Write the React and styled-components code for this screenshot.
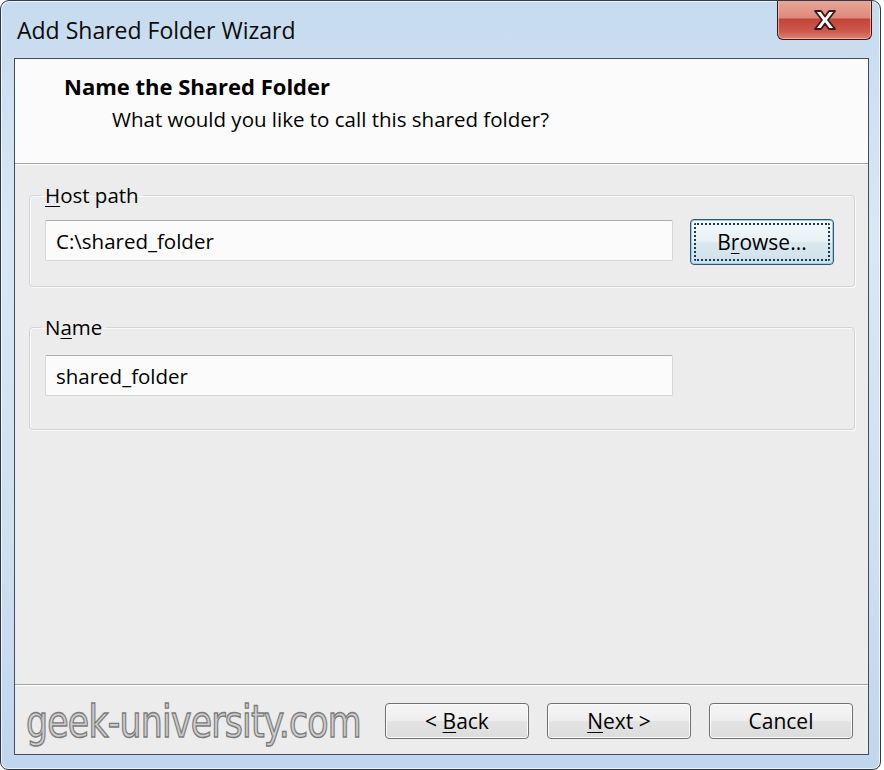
import React from "react";
import styled, { createGlobalStyle } from "styled-components";

const Global = createGlobalStyle`
  html, body { margin: 0; padding: 0; background: #ffffff; }
  body { font-family: "Open Sans", "Noto Sans", sans-serif; }
  * { box-sizing: border-box; }
`;

const Window = styled.div`
  width: 881px;
  height: 770px;
  border: 1px solid #2e3b4a;
  border-radius: 9px 9px 8px 8px;
  background: linear-gradient(180deg, #c6dbef 0%, #d9e7f5 30%, #cfe0f1 70%, #c0d6ec 100%);
  box-shadow: inset 0 0 0 1px rgba(255, 255, 255, 0.7);
  padding: 0 11px 14px 13px;
  display: flex;
  flex-direction: column;
  overflow: hidden;
`;

const TitleBar = styled.div`
  height: 57px;
  display: flex;
  align-items: flex-start;
  justify-content: space-between;
`;

const Title = styled.div`
  margin: 14px 0 0 3px;
  font-family: "Open Sans", sans-serif;
  font-size: 23px;
  line-height: 30px;
  color: #0b0b0b;
`;

const CloseButton = styled.div`
  margin: -1px -3px 0 0;
  width: 95px;
  height: 40px;
  border: 1px solid #3d1712;
  border-top: none;
  border-radius: 0 0 6px 6px;
  background: linear-gradient(180deg, #e9a899 0%, #dd8a7a 45%, #c4443a 50%, #cd5a4c 80%, #d98475 100%);
  box-shadow: inset 0 0 0 1px rgba(255, 210, 200, 0.6);
  display: flex;
  align-items: center;
  justify-content: center;
`;

const Client = styled.div`
  flex: 1;
  display: flex;
  flex-direction: column;
  border: 1px solid #3f4e5e;
  background: #ececec;
`;

const Header = styled.div`
  height: 105px;
  background: #fbfbfb;
  padding: 12px 0 0 49px;
  display: flex;
  flex-direction: column;
  gap: 4px;
  border-bottom: 1px solid #a3a3a3;
  box-shadow: 0 1px 0 #ffffff;
`;

const HeaderTitle = styled.div`
  font-family: "Open Sans", sans-serif;
  font-weight: 700;
  font-size: 22px;
  line-height: 30px;
  color: #000;
`;

const HeaderSub = styled.div`
  margin-left: 48px;
  font-family: "Open Sans", sans-serif;
  font-size: 20.5px;
  line-height: 28px;
  color: #000;
`;

const Body = styled.div`
  flex: 1;
  margin-top: 1px;
  padding: 17px 13px 0 14px;
  display: flex;
  flex-direction: column;
  gap: 27px;
`;

const Group = styled.fieldset`
  margin: 0;
  padding: ${(p) => p.$top}px 20px ${(p) => p.$bottom}px 15px;
  border: 1px solid #d3d3d3;
  border-radius: 4px;
  box-shadow: inset 1px 1px 0 #fafafa, 1px 1px 0 #fafafa;
  display: flex;
  align-items: flex-start;
  gap: 17px;
`;

const Legend = styled.legend`
  margin-left: -4px;
  padding: 0 4px;
  font-family: "Open Sans", sans-serif;
  font-size: 20.5px;
  line-height: 26px;
  color: #000;
`;

const Mn = styled.span`
  text-decoration: underline;
  text-underline-offset: 3px;
  text-decoration-thickness: 1px;
`;

const Input = styled.div`
  width: 628px;
  height: 41px;
  margin-top: ${(p) => p.$offset || 0}px;
  padding: 0 10px;
  background: #fbfbfb;
  border: 1px solid #d6d6d6;
  border-top-color: #adadad;
  border-radius: 2px;
  display: flex;
  align-items: center;
  font-family: "Open Sans", sans-serif;
  font-size: 20.5px;
  color: #000;
`;

const Button = styled.div`
  width: 144px;
  height: ${(p) => (p.$tall ? 46 : 36)}px;
  border: 1px solid ${(p) => (p.$focus ? "#2c5870" : "#707070")};
  border-radius: 4px;
  background: ${(p) =>
    p.$focus
      ? "linear-gradient(180deg, #f4f9fb 0%, #e8f1f5 48%, #d9e8ef 52%, #cfe2ea 100%)"
      : "linear-gradient(180deg, #f6f6f6 0%, #eeeeee 48%, #e3e3e3 52%, #dcdcdc 100%)"};
  box-shadow: inset 0 0 0 1px ${(p) => (p.$focus ? "#9ccbe3" : "#fbfbfb")};
  display: flex;
  align-items: center;
  justify-content: center;
  padding: 3px;
  font-family: "Open Sans", sans-serif;
  font-size: 21px;
  color: #000;
`;

const FocusRing = styled.div`
  width: 100%;
  height: 100%;
  border: 2px dotted #1d3947;
  border-radius: 2px;
  display: flex;
  align-items: center;
  justify-content: center;
`;

const Footer = styled.div`
  height: 70px;
  border-top: 1px solid #a3a3a3;
  box-shadow: inset 0 1px 0 #ffffff;
  display: flex;
  align-items: flex-start;
  padding: 18px 15px 0 11px;
`;

const Watermark = styled.div`
  flex: 1 1 0;
  min-width: 0;
  margin-top: -7px;
  font-family: "DejaVu Sans", sans-serif;
  font-size: 44px;
  line-height: 52px;
  letter-spacing: -1px;
  color: #cdcdcd;
  -webkit-text-stroke: 1.4px #7b7b7b;
  transform: scaleX(0.79);
  transform-origin: left center;
  white-space: nowrap;
`;

const Buttons = styled.div`
  display: flex;
  flex-shrink: 0;
  gap: 18px;
`;

function CloseGlyph() {
  return (
    <svg width="28" height="24" viewBox="0 0 28 24">
      <path
        d="M4 3 L10 3 L14 8.5 L18 3 L24 3 L17 12 L24 21 L18 21 L14 15.5 L10 21 L4 21 L11 12 Z"
        fill="#ffffff"
        stroke="#3a1a16"
        strokeWidth="1.8"
        strokeLinejoin="round"
      />
    </svg>
  );
}

export default function App() {
  return (
    <>
      <Global />
      <Window>
        <TitleBar>
          <Title>Add Shared Folder Wizard</Title>
          <CloseButton>
            <CloseGlyph />
          </CloseButton>
        </TitleBar>
        <Client>
          <Header>
            <HeaderTitle>Name the Shared Folder</HeaderTitle>
            <HeaderSub>What would you like to call this shared folder?</HeaderSub>
          </Header>
          <Body>
            <Group $top={11} $bottom={21}>
              <Legend>
                <Mn>H</Mn>ost path
              </Legend>
              <Input $offset={1}>C:\shared_folder</Input>
              <Button $focus $tall>
                <FocusRing>
                  <span>
                    B<Mn>r</Mn>owse...
                  </span>
                </FocusRing>
              </Button>
            </Group>
            <Group $top={15} $bottom={33}>
              <Legend>
                N<Mn>a</Mn>me
              </Legend>
              <Input>shared_folder</Input>
            </Group>
          </Body>
          <Footer>
            <Watermark>geek-university.com</Watermark>
            <Buttons>
              <Button>
                <span>
                  &lt; <Mn>B</Mn>ack
                </span>
              </Button>
              <Button>
                <span>
                  <Mn>N</Mn>ext &gt;
                </span>
              </Button>
              <Button>Cancel</Button>
            </Buttons>
          </Footer>
        </Client>
      </Window>
    </>
  );
}
